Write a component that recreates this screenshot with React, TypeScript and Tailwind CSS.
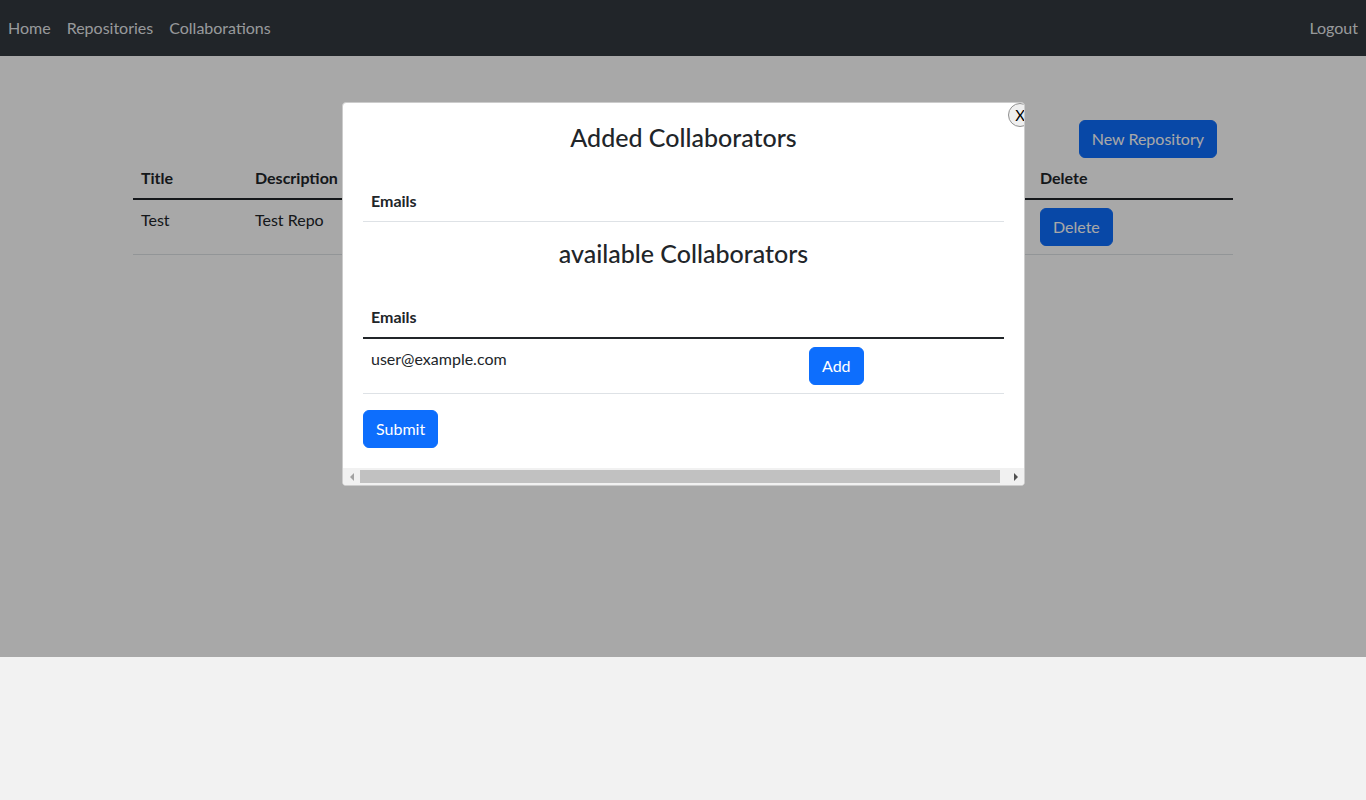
import { useState } from 'react';

const repos = [{ id: 1, title: 'Test', description: 'Test Repo', owner: 'user@example.com' }];
const available = ['user@example.com'];

function Scrollbar() {
  return (
    <div className="flex h-[17px] bg-[#f1f1f1]">
      <div className="flex w-[17px] items-center justify-center">
        <span className="h-0 w-0 border-y-[4px] border-r-[4px] border-y-transparent border-r-[#a3a3a3]" />
      </div>
      <div className="my-[2px] flex-1 bg-[#c1c1c1]" />
      <div className="ml-[7px] flex w-[17px] items-center justify-center">
        <span className="h-0 w-0 border-y-[4px] border-l-[4px] border-y-transparent border-l-[#505050]" />
      </div>
    </div>
  );
}

const btn = 'rounded-md border border-[#0d6efd] bg-[#0d6efd] px-3 py-1.5 leading-6 text-white';

export default function App() {
  const [isOpen] = useState(true);
  const [added, setAdded] = useState<string[]>([]);

  return (
    <div className="min-h-screen bg-[#f2f2f2] font-['Lato',sans-serif] text-base text-[#212529]">
      {/* Navbar */}
      <nav className="flex h-14 items-center justify-between bg-[#212529] leading-6 text-[rgba(255,255,255,0.55)]">
        <div className="flex">
          <a className="px-2">Home</a>
          <a className="px-2">Repositories</a>
          <a className="px-2">Collaborations</a>
        </div>
        <a className="px-2">Logout</a>
      </nav>

      <main className="relative h-[601px] bg-white">
        <div className="mx-auto w-[1100px] pt-16">
          <div className="flex justify-end pr-4">
            <button className={btn}>New Repository</button>
          </div>
          <table className="w-full table-fixed leading-6">
            <thead>
              <tr className="border-b-2 border-[#212529] text-left font-bold">
                <th className="w-[114px] p-2">Title</th>
                <th className="w-[392px] p-2">Description</th>
                <th className="w-[393px] p-2">Collaborators</th>
                <th className="w-[201px] p-2">Delete</th>
              </tr>
            </thead>
            <tbody>
              {repos.map((r) => (
                <tr key={r.id} className="border-b border-[#dee2e6] align-top">
                  <td className="p-2">{r.title}</td>
                  <td className="p-2">{r.description}</td>
                  <td className="p-2" />
                  <td className="p-2">
                    <button className={btn}>Delete</button>
                  </td>
                </tr>
              ))}
            </tbody>
          </table>
        </div>

        {isOpen && (
          <>
            <div className="absolute inset-0 bg-black/[0.34]" />
            <div className="absolute left-[342px] top-[46px] w-[683px] overflow-hidden rounded border border-[#cccccc] bg-white">
              <button className="absolute left-[665px] top-0 flex h-6 w-6 items-center justify-center rounded-full border border-[#8f8f8f] bg-[#efefef] text-[15px] leading-none text-black">
                X
              </button>
              <div className="p-5">
                <h4 className="text-center text-[25px] font-medium leading-[29px]">Added Collaborators</h4>
                <table className="mt-[29px] w-full leading-6">
                  <thead>
                    <tr className="border-b border-[#dee2e6] text-left font-bold">
                      <th className="p-2">Emails</th>
                    </tr>
                  </thead>
                  <tbody>
                    {added.map((e) => (
                      <tr key={e} className="border-b border-[#dee2e6]">
                        <td className="p-2">{e}</td>
                      </tr>
                    ))}
                  </tbody>
                </table>

                <h4 className="mt-[17px] text-center text-[25px] font-medium leading-[29px]">available Collaborators</h4>
                <table className="mt-[29px] w-full table-fixed leading-6">
                  <thead>
                    <tr className="border-b-2 border-[#212529] text-left font-bold">
                      <th className="w-[438px] p-2">Emails</th>
                      <th className="p-2" />
                    </tr>
                  </thead>
                  <tbody>
                    {available.map((e) => (
                      <tr key={e} className="border-b border-[#dee2e6] align-top">
                        <td className="p-2">{e}</td>
                        <td className="p-2">
                          <button onClick={() => setAdded([...added, e])} className={btn}>
                            Add
                          </button>
                        </td>
                      </tr>
                    ))}
                  </tbody>
                </table>

                <button className={`mt-4 ${btn}`}>Submit</button>
              </div>
              <Scrollbar />
            </div>
          </>
        )}
      </main>
    </div>
  );
}
